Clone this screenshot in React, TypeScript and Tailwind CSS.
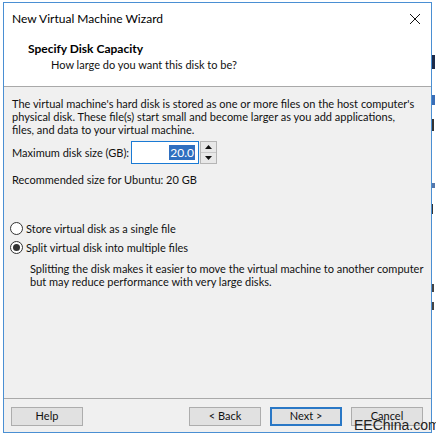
const font = { fontFamily: 'Lato, "Noto Sans", sans-serif' };

const Button = ({ label, primary }: { label: string; primary?: boolean }) => (
  <div
    className={
      "w-[72px] h-[19px] flex items-center justify-center text-[11px] text-[#111] bg-[#e1e1e1] " +
      (primary ? "border-2 border-[#2a78c6]" : "border border-[#adadad]")
    }
  >
    {label}
  </div>
);

const Radio = ({ checked, label }: { checked?: boolean; label: string }) => (
  <div className="flex items-center h-[19px]">
    <div className="w-[13px] h-[13px] rounded-full border border-[#333] bg-white flex items-center justify-center mr-[3px]">
      {checked && <div className="w-[7px] h-[7px] rounded-full bg-[#333]" />}
    </div>
    <span>{label}</span>
  </div>
);

export default function App() {
  return (
    <div className="w-[436px] h-[437px] bg-white flex overflow-hidden" style={font}>
      <div className="w-[3px]" />
      <div className="w-[429px] h-[431px] mt-[2px] border border-[#4a8fd3] flex flex-col text-[11px] text-[#111]">
        <div className="bg-white">
          <div className="h-[31px] flex items-center justify-between pl-[8px] pr-[10px] text-[12px] text-black">
            <span>New Virtual Machine Wizard</span>
            <svg width="12" height="12" viewBox="0 0 12 12">
              <path d="M1 1 L11 11 M11 1 L1 11" stroke="#111" strokeWidth="1" />
            </svg>
          </div>
          <div className="pt-[7px] pb-[13px] leading-[16px] border-b border-[#a9a9a9]">
            <div className="pl-[24px] font-bold text-[12px] text-black">Specify Disk Capacity</div>
            <div className="pl-[47px]">How large do you want this disk to be?</div>
          </div>
        </div>
        <div className="flex-1 bg-[#f0f0f0] pl-[8px] pt-[10px] leading-[13px]">
          <p className="whitespace-nowrap">
            The virtual machine's hard disk is stored as one or more files on the host computer's
            <br />
            physical disk. These file(s) start small and become larger as you add applications,
            <br />
            files, and data to your virtual machine.
          </p>
          <div className="flex items-center mt-[5px]">
            <span className="w-[119px] whitespace-nowrap">Maximum disk size (GB):</span>
            <div className="w-[68px] h-[23px] bg-white border border-[#1a7ad4] flex items-center justify-end pr-[3px]">
              <span className="bg-[#2f6fc0] text-white px-[1px] leading-[15px] text-[12px]">20.0</span>
            </div>
            <div className="w-[17px] h-[23px] ml-[1px] flex flex-col border border-[#b5b5b5] bg-[#e8e8e8]">
              <div className="flex-1 flex items-center justify-center border-b border-[#c8c8c8]">
                <svg width="7" height="4" viewBox="0 0 7 4">
                  <path d="M0 4 L3.5 0 L7 4 Z" fill="#111" />
                </svg>
              </div>
              <div className="flex-1 flex items-center justify-center">
                <svg width="7" height="4" viewBox="0 0 7 4">
                  <path d="M0 0 L3.5 4 L7 0 Z" fill="#111" />
                </svg>
              </div>
            </div>
          </div>
          <div className="mt-[9px]">Recommended size for Ubuntu: 20 GB</div>
          <div className="mt-[33px] -ml-[2px]">
            <Radio label="Store virtual disk as a single file" />
            <Radio checked label="Split virtual disk into multiple files" />
          </div>
          <p className="mt-[5px] pl-[18px] whitespace-nowrap">
            Splitting the disk makes it easier to move the virtual machine to another computer
            <br />
            but may reduce performance with very large disks.
          </p>
        </div>
        <div className="h-[34px] bg-[#f0f0f0] border-t border-[#a9a9a9] flex items-start pt-[8px] pl-[7px] pr-[8px]">
          <Button label="Help" />
          <div className="flex-1" />
          <div className="flex gap-[9px]">
            <Button label="< Back" />
            <Button primary label="Next >" />
            <div className="relative">
              <Button label="Cancel" />
              <span
                className="absolute left-[3px] top-[11px] text-[14px] leading-[14px] text-[#222] whitespace-nowrap"
                style={{ fontFamily: '"Liberation Sans", sans-serif' }}
              >
                EEChina.com
              </span>
            </div>
          </div>
        </div>
      </div>
      <div className="w-[4px] flex flex-col">
        <div className="h-[55px]" />
        <div className="h-[14px] w-[3px] bg-[#1c2b4a]" />
        <div className="h-[26px]" />
        <div className="h-[10px] w-[3px] bg-[#3a6db5]" />
        <div className="h-[14px]" />
        <div className="h-[12px] w-[2px] bg-[#333]" />
        <div className="h-[52px]" />
        <div className="h-[5px] w-[3px] bg-[#5577aa]" />
        <div className="h-[16px]" />
        <div className="h-[10px] w-[1px] bg-[#333]" />
        <div className="h-[70px]" />
        <div className="h-[8px] w-[2px] bg-[#444]" />
        <div className="h-[10px]" />
        <div className="h-[8px] w-[2px] bg-[#444]" />
      </div>
    </div>
  );
}
